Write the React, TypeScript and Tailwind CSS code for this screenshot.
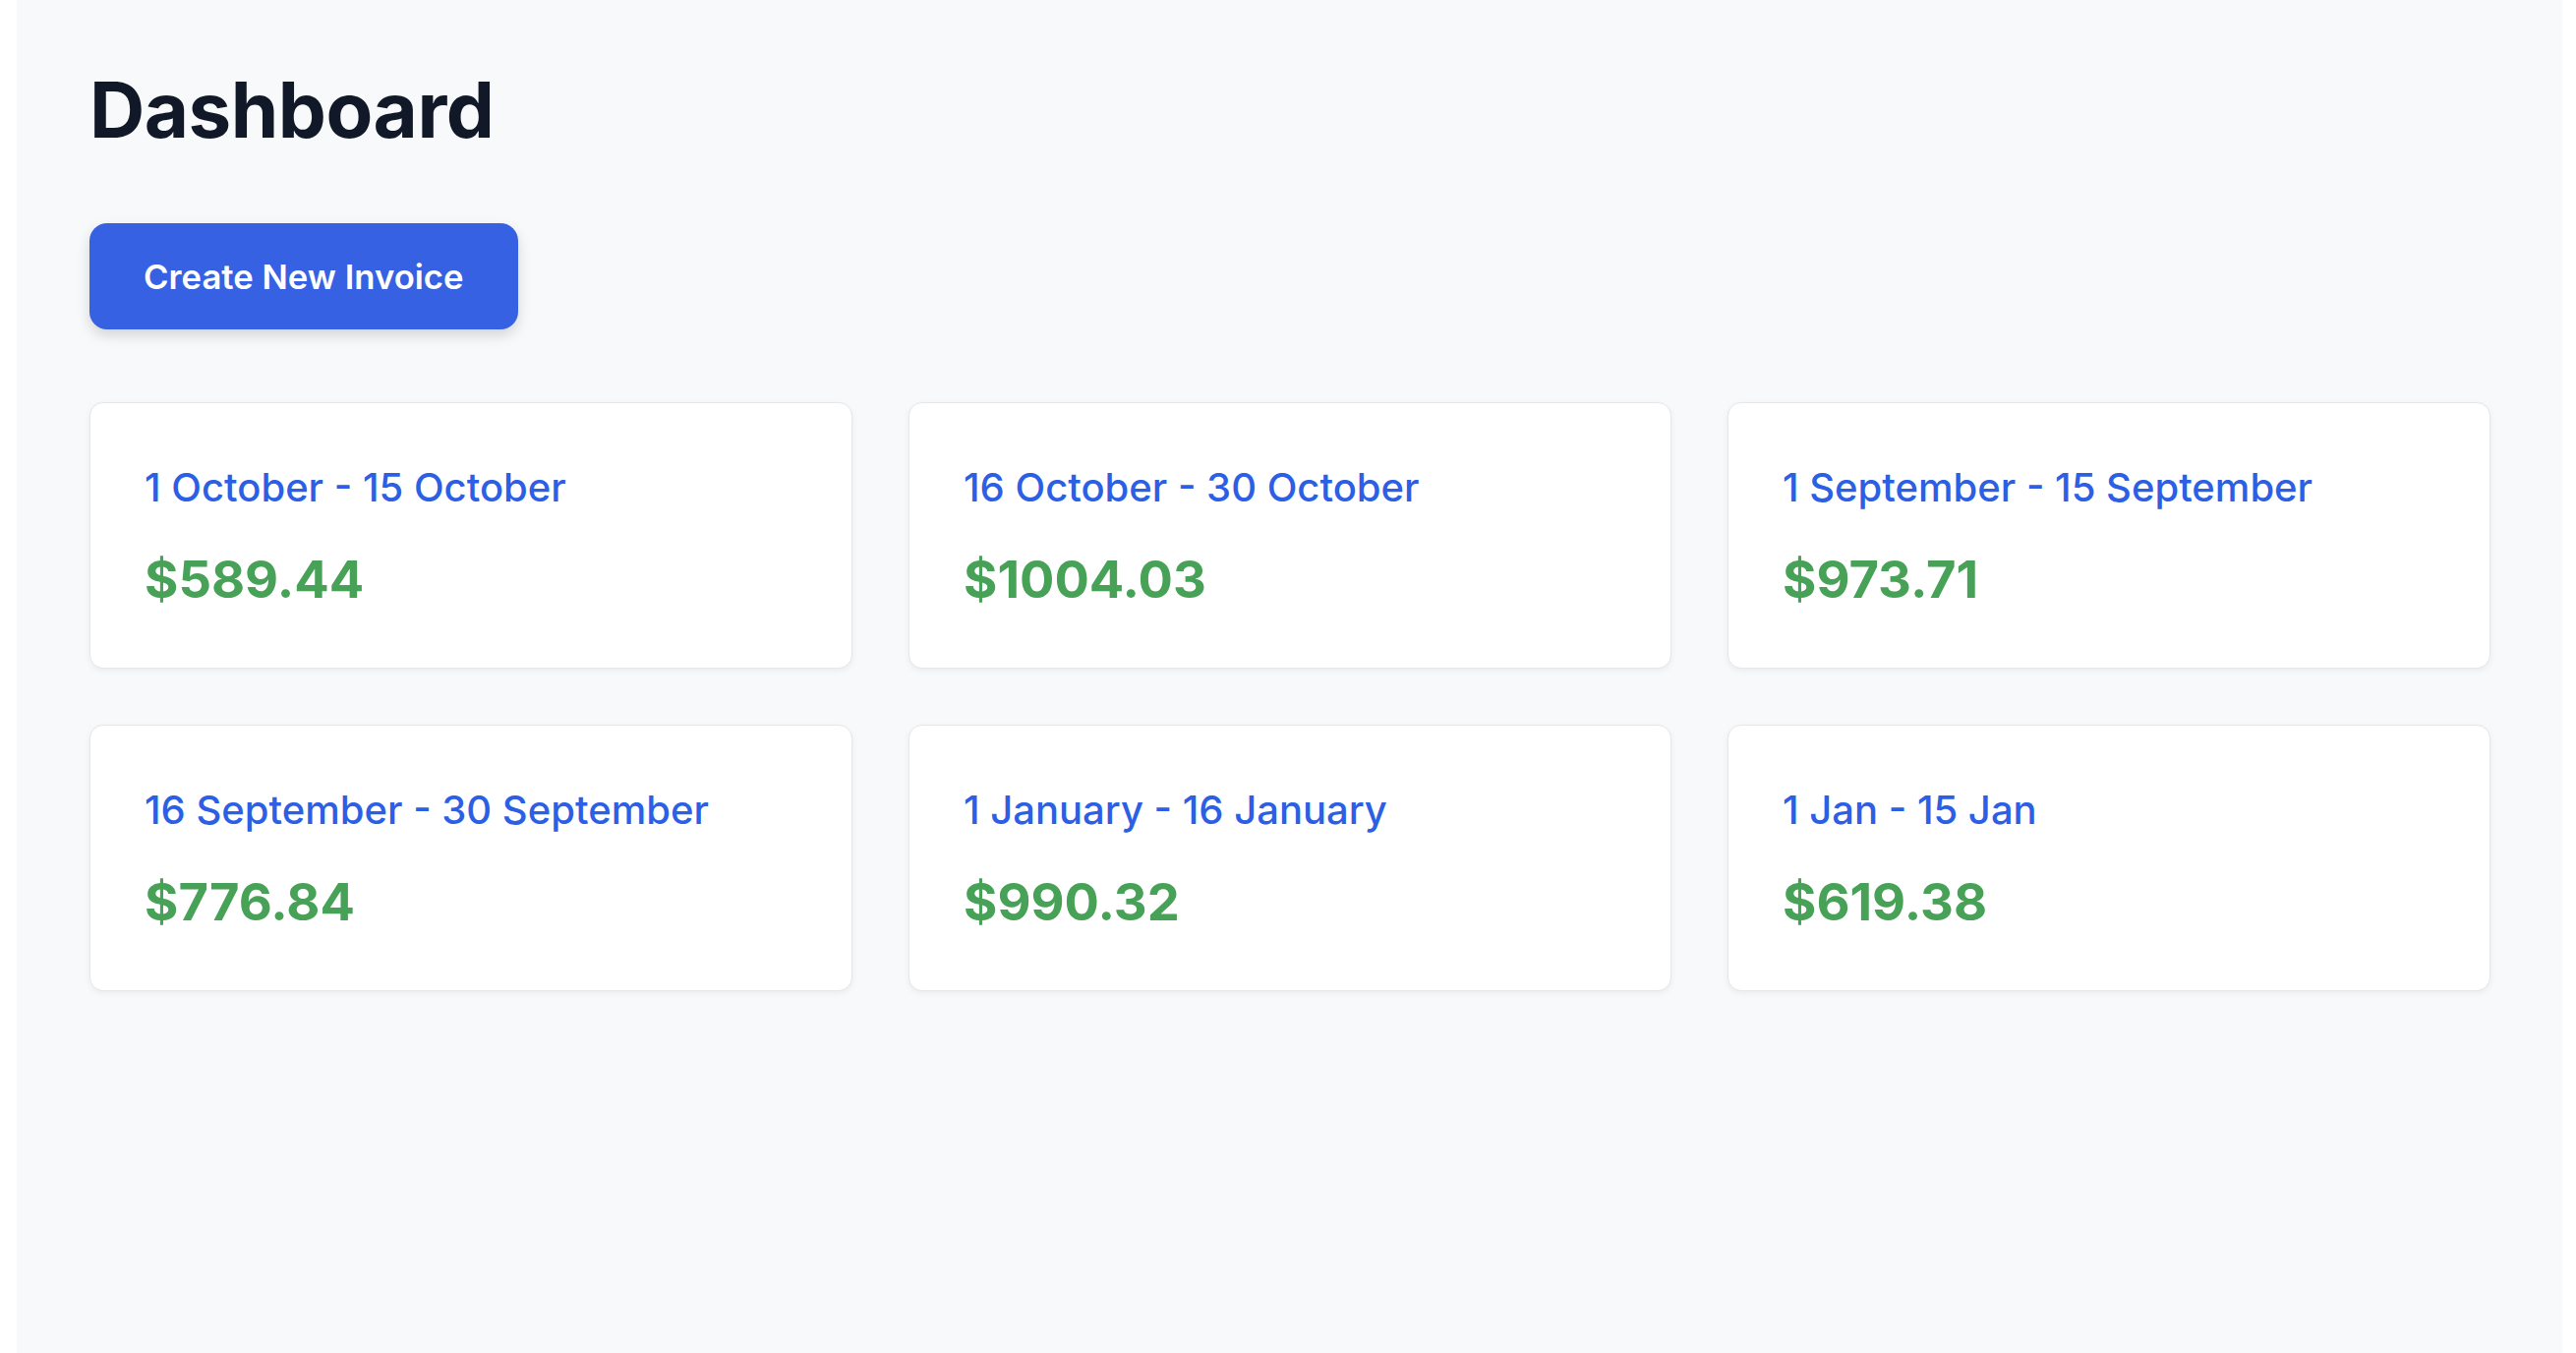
import React from "react";

const periods = [
  { label: "1 October - 15 October", amount: "$589.44" },
  { label: "16 October - 30 October", amount: "$1004.03" },
  { label: "1 September - 15 September", amount: "$973.71" },
  { label: "16 September - 30 September", amount: "$776.84" },
  { label: "1 January - 16 January", amount: "$990.32" },
  { label: "1 Jan - 15 Jan", amount: "$619.38" },
];

export default function App() {
  return (
    <div
      className="flex min-h-[1376px] w-full bg-white"
      style={{ fontFamily: "Inter, 'Noto Sans', sans-serif" }}
    >
      <div className="ml-[17px] w-[2589px] min-h-[1376px] bg-[#f8f9fb] pl-[74px] pr-[73px] pt-[66px]">
        <h1 className="text-[78px] leading-[92px] font-bold text-[#111827] tracking-[-0.5px]">
          Dashboard
        </h1>
        <button className="mt-[69px] flex h-[108px] items-center rounded-[18px] bg-[#3561e2] px-[55px] text-[34.7px] font-semibold text-white shadow-[0_6px_14px_rgba(0,0,0,0.15)]">
          Create New Invoice
        </button>
        <div className="mt-[74px] grid grid-cols-3 gap-[57px]">
          {periods.map((p) => (
            <div
              key={p.label}
              className="h-[271px] rounded-[14px] border border-[#e6e7ea] bg-white px-[55px] pt-[55px] shadow-[0_2px_6px_rgba(0,0,0,0.06)]"
            >
              <div className="text-[40px] leading-[62px] font-medium text-[#2c5fe3]">
                {p.label}
              </div>
              <div className="mt-[28px] text-[52.5px] leading-[68px] font-bold text-[#47a157]">
                {p.amount}
              </div>
            </div>
          ))}
        </div>
      </div>
    </div>
  );
}
